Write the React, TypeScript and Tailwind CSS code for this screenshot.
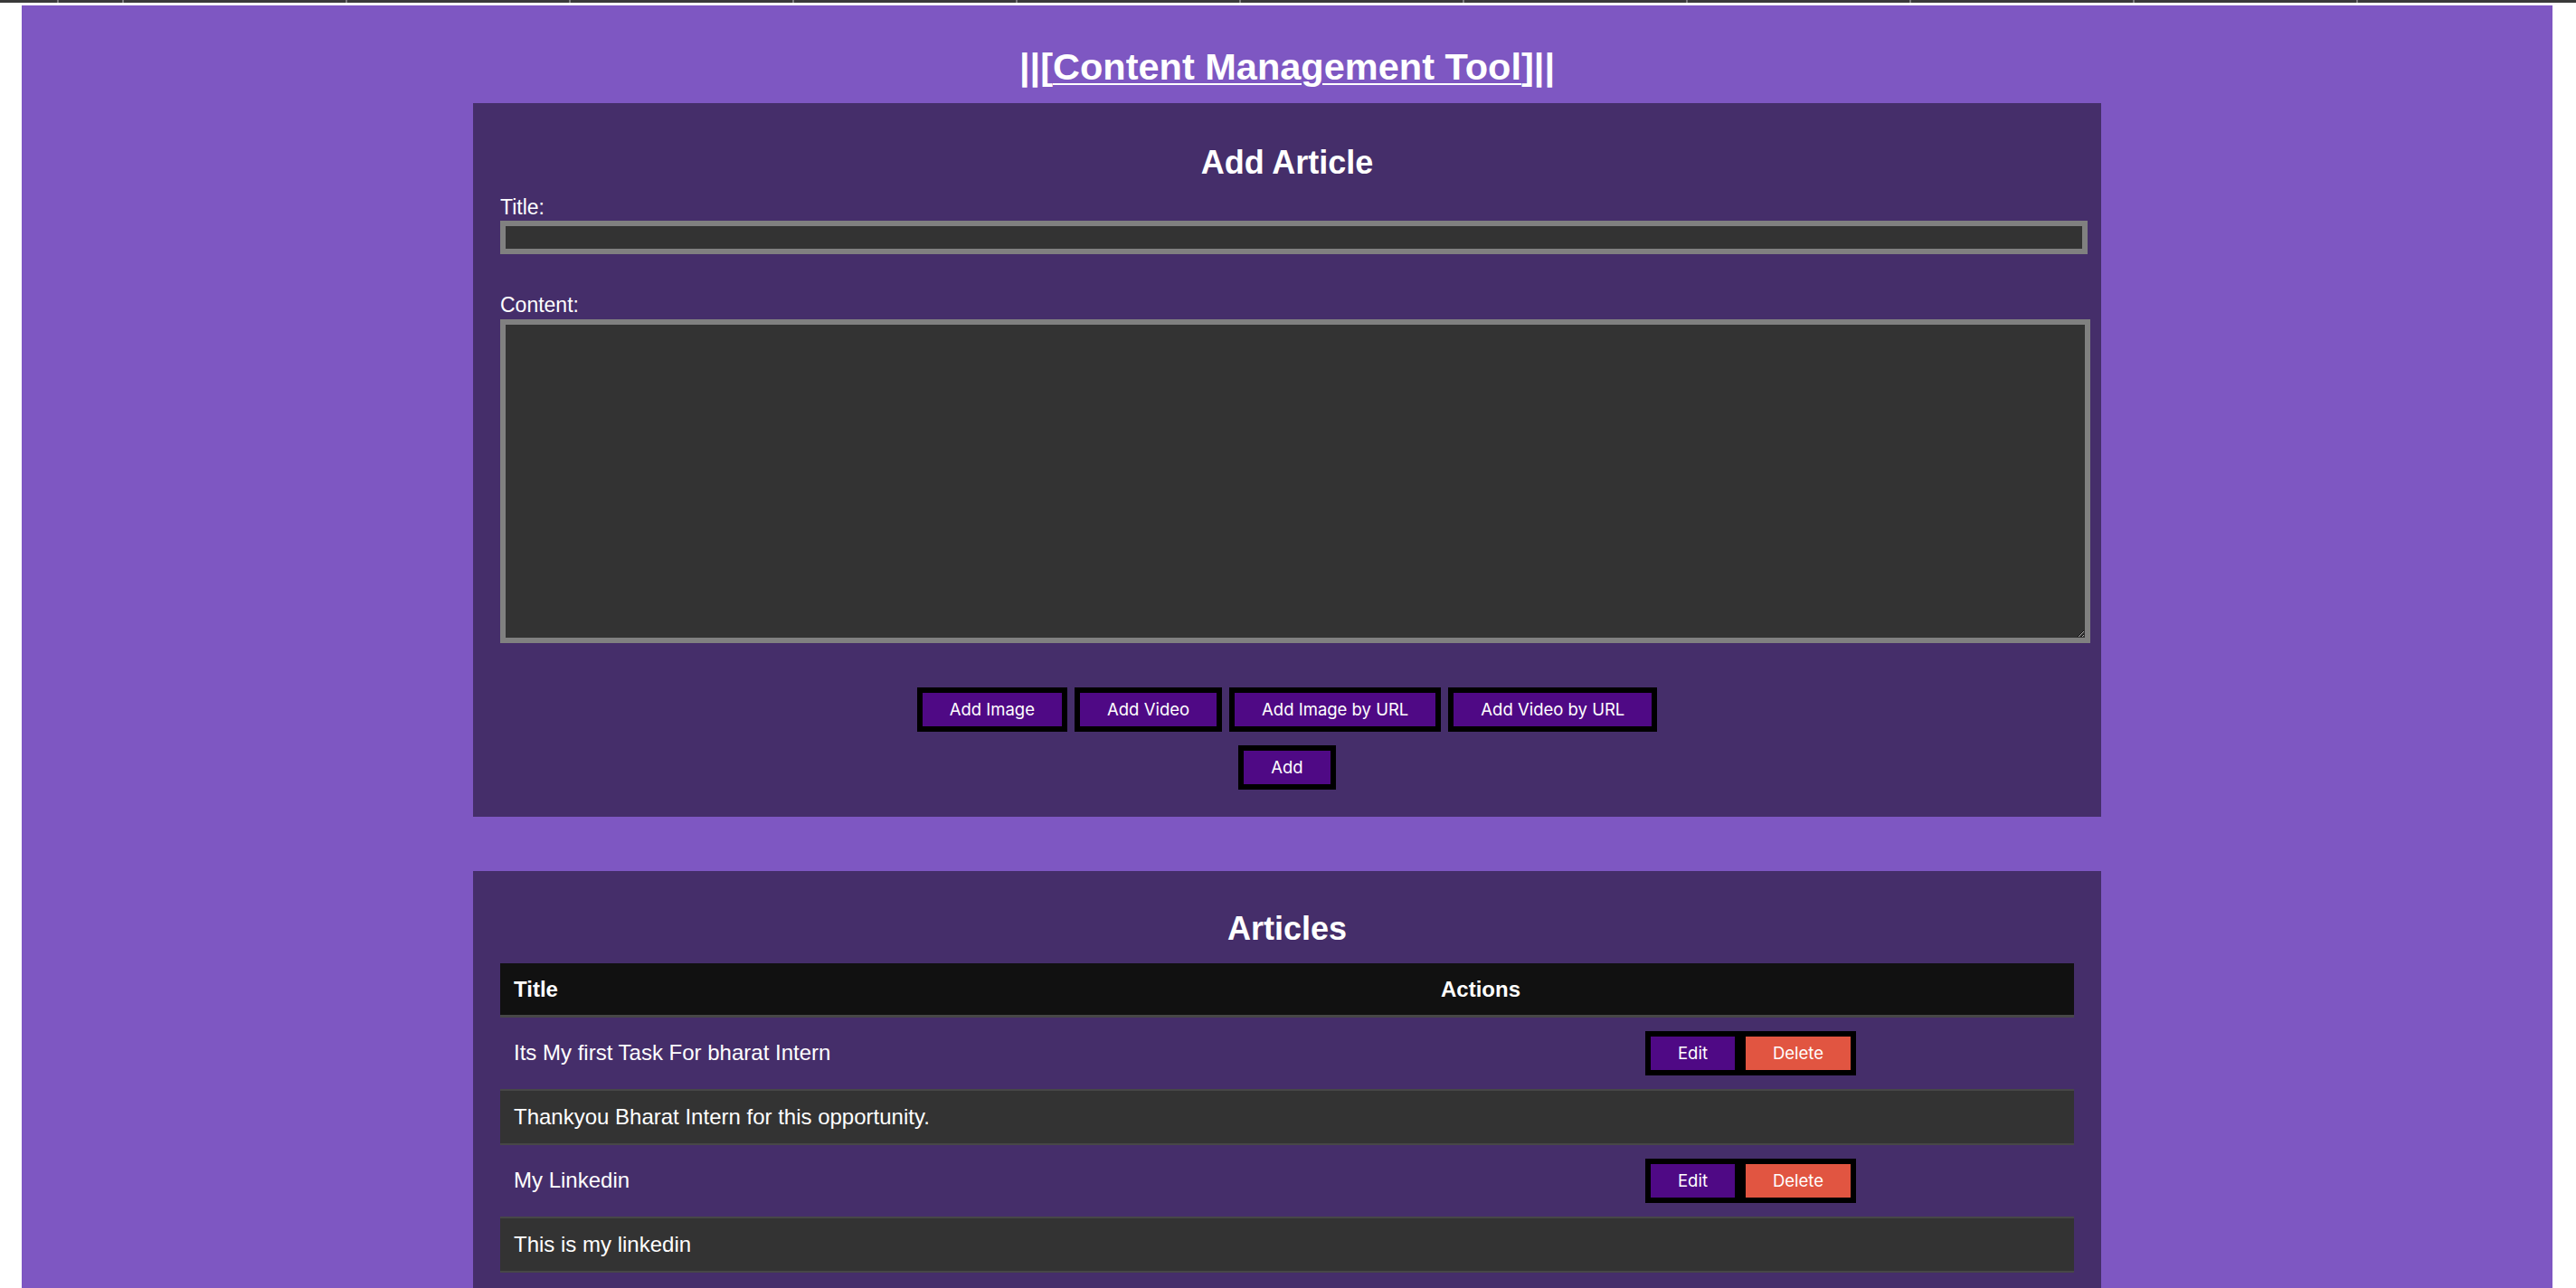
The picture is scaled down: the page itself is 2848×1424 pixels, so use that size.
import { useState } from "react";

type Article = { id: number; title: string; content: string };

const initialArticles: Article[] = [
  { id: 1, title: "Its My first Task For bharat Intern", content: "Thankyou Bharat Intern for this opportunity." },
  { id: 2, title: "My Linkedin", content: "This is my linkedin" },
];

// widths of the little ruler strip along the top edge
const rulerSegments = [65, 72, 247, 247, 247, 247, 247, 247, 247, 247, 247, 247];

const sans = { fontFamily: '"Liberation Sans", Arial, sans-serif' };

function ActionButton({
  children,
  danger = false,
  onClick,
}: {
  children: React.ReactNode;
  danger?: boolean;
  onClick?: () => void;
}) {
  return (
    <button
      type="button"
      onClick={onClick}
      className={
        "h-[49px] border-[6px] border-black px-[30px] text-[18.5px] leading-none text-white font-['Inter',sans-serif] " +
        (danger ? "bg-[#e15541]" : "bg-[#4f0985]")
      }
    >
      {children}
    </button>
  );
}

export default function App() {
  const [articles, setArticles] = useState<Article[]>(initialArticles);
  const [title, setTitle] = useState("");
  const [content, setContent] = useState("");

  const addArticle = () => {
    if (!title.trim()) return;
    setArticles((a) => [...a, { id: Date.now(), title, content }]);
    setTitle("");
    setContent("");
  };

  return (
    <div className="min-h-screen bg-white text-white" style={sans}>
      <div className="flex h-[3px] bg-[#3a3a3a]">
        {rulerSegments.map((w, i) => (
          <div key={i} className="h-full shrink-0 border-r-2 border-[#7a7a7a]" style={{ width: w }} />
        ))}
      </div>

      <div className="ml-[24px] mr-[26px] mt-[3px] min-h-[1418px] bg-[#7e57c2] pt-[44px]">
        <h1 className="text-center text-[41.5px] font-bold leading-[48px]">
          ||[<span className="underline decoration-[2px] underline-offset-[4px]">Content Management Tool</span>]||
        </h1>

        <section className="mx-auto mt-[16px] w-[1800px] bg-[#452e6a] px-[30px] pb-[30px] pt-[45px]">
          <h2 className="text-center text-[36px] font-bold leading-[41px]">Add Article</h2>

          <label className="mt-[16px] block text-[23px] leading-[27px]">Title:</label>
          <input
            value={title}
            onChange={(e) => setTitle(e.target.value)}
            className="mt-[1px] block h-[37px] w-[1755px] border-[6px] border-[#808080] bg-[#333333] px-2 text-[20px] text-white outline-none"
          />

          <label className="mt-[43px] block text-[23px] leading-[27px]">Content:</label>
          <textarea
            value={content}
            onChange={(e) => setContent(e.target.value)}
            className="mt-[2px] block h-[358px] w-[1758px] border-[6px] border-[#808080] bg-[#333333] p-2 text-[20px] text-white outline-none"
          />

          <div className="mt-[49px] flex justify-center gap-[8px]">
            <ActionButton>Add Image</ActionButton>
            <ActionButton>Add Video</ActionButton>
            <ActionButton>Add Image by URL</ActionButton>
            <ActionButton>Add Video by URL</ActionButton>
          </div>
          <div className="mt-[15px] flex justify-center">
            <ActionButton onClick={addArticle}>Add</ActionButton>
          </div>
        </section>

        <section className="mx-auto mt-[60px] w-[1800px] bg-[#452e6a] px-[30px] pb-[30px] pt-[43px]">
          <h2 className="text-center text-[36px] font-bold leading-[41px]">Articles</h2>

          <table className="mt-[18px] w-[1740px] table-fixed border-collapse text-[24px]">
            <colgroup>
              <col className="w-[1025px]" />
              <col className="w-[715px]" />
            </colgroup>
            <thead>
              <tr className="h-[58px] border-b-[3px] border-[#474747] bg-[#111111]">
                <th className="px-[15px] text-left font-bold leading-[27px]">Title</th>
                <th className="px-[15px] text-left font-bold leading-[27px]">Actions</th>
              </tr>
            </thead>
            <tbody>
              {articles.map((a) => (
                <ArticleRows
                  key={a.id}
                  article={a}
                  onDelete={() => setArticles((list) => list.filter((x) => x.id !== a.id))}
                />
              ))}
            </tbody>
          </table>
        </section>
      </div>
    </div>
  );
}

function ArticleRows({ article, onDelete }: { article: Article; onDelete: () => void }) {
  return (
    <>
      <tr className="border-b-2 border-[#474747]">
        <td className="px-[15px] py-[15px] align-middle leading-[28px]">{article.title}</td>
        <td className="px-[15px] py-[15px] text-center align-middle">
          <div className="inline-flex">
            <ActionButton>Edit</ActionButton>
            <ActionButton danger onClick={onDelete}>
              Delete
            </ActionButton>
          </div>
        </td>
      </tr>
      <tr className="border-b-2 border-[#474747] bg-[#333333]">
        <td colSpan={2} className="px-[15px] py-[15px] leading-[28px]">
          {article.content}
        </td>
      </tr>
    </>
  );
}
